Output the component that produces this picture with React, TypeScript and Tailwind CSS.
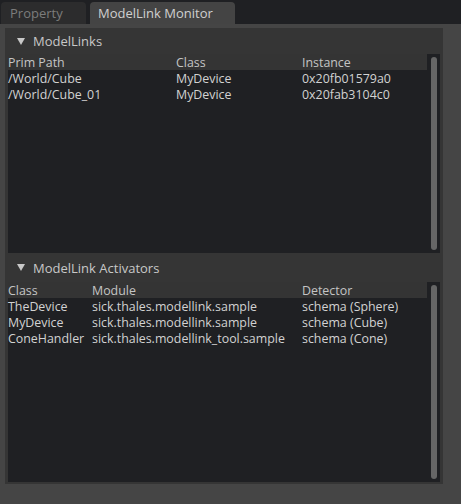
import React from 'react';

const Triangle = () => (
  <svg width="8" height="7" viewBox="0 0 8 7" className="shrink-0">
    <path d="M0 0 H8 L4 7 Z" fill="#c8c8c8" />
  </svg>
);

const Scrollbar = () => (
  <div className="w-[13px] bg-[#1f2023] py-[3px] pl-[4px] pr-[3px] flex">
    <div className="w-[6px] flex-1 rounded-full bg-[#666666]" />
  </div>
);

type Col = { label: string; w: string };

const Table = ({ cols, rows, className }: { cols: Col[]; rows: string[][]; className: string }) => (
  <div className={`flex ${className}`}>
    <div className="flex-1 flex flex-col">
      <div className="flex h-[16px] pt-[2px] items-center text-[#c4c4c4] bg-[#343434]">
        {cols.map((c) => (
          <div key={c.label} className={`${c.w} whitespace-nowrap`}>{c.label}</div>
        ))}
      </div>
      <div className="flex-1 bg-[#1f2023] text-[#d2d2d2]">
        {rows.map((r, i) => (
          <div key={i} className="flex h-[16px] pt-[2px] items-center">
            {r.map((v, j) => (
              <div key={j} className={`${cols[j].w} whitespace-nowrap`}>{v}</div>
            ))}
          </div>
        ))}
      </div>
    </div>
    <Scrollbar />
  </div>
);

const App = () => {
  return (
    <div
      className="w-[461px] h-[504px] bg-[#1f2023] flex flex-col text-[12.4px] leading-[14px]"
      style={{ fontFamily: '"Open Sans", "Noto Sans", sans-serif' }}
    >
      {/* Tabs */}
      <div className="h-[24px] flex items-end pl-[1px] gap-[4px] shrink-0">
        <div className="w-[85px] h-[22px] rounded-t-[4px] bg-[#2c2c2d] text-[#7c7c7c] flex items-center pl-[9px] text-[13px]">
          Property
        </div>
        <div className="w-[145px] h-[22px] rounded-t-[4px] bg-[#444444] text-[#d0d0d0] flex items-center pl-[8px] text-[13px]">
          ModelLink Monitor
        </div>
      </div>
      {/* Panel */}
      <div className="flex-1 bg-[#454545] pt-[4px] pl-[5px] pr-[18px] pb-[20px] flex flex-col">
        <div className="flex-1 bg-[#353535] flex flex-col px-[3px] pb-[2px]">
          <div className="h-[26px] flex items-center gap-[8px] pl-[9px] text-[#c8c8c8] text-[13px]">
            <Triangle />
            <span>ModelLinks</span>
          </div>
          <Table
            className="h-[199px]"
            cols={[
              { label: 'Prim Path', w: 'w-[168px]' },
              { label: 'Class', w: 'w-[126px]' },
              { label: 'Instance', w: 'flex-1' },
            ]}
            rows={[
              ['/World/Cube', 'MyDevice', '0x20fb01579a0'],
              ['/World/Cube_01', 'MyDevice', '0x20fab3104c0'],
            ]}
          />
          <div className="h-[29px] flex items-center gap-[8px] pl-[9px] text-[#c8c8c8] text-[13px]">
            <Triangle />
            <span>ModelLink Activators</span>
          </div>
          <Table
            className="flex-1"
            cols={[
              { label: 'Class', w: 'w-[84px]' },
              { label: 'Module', w: 'w-[210px]' },
              { label: 'Detector', w: 'flex-1' },
            ]}
            rows={[
              ['TheDevice', 'sick.thales.modellink.sample', 'schema (Sphere)'],
              ['MyDevice', 'sick.thales.modellink.sample', 'schema (Cube)'],
              ['ConeHandler', 'sick.thales.modellink_tool.sample', 'schema (Cone)'],
            ]}
          />
        </div>
      </div>
    </div>
  );
};

export default App;
